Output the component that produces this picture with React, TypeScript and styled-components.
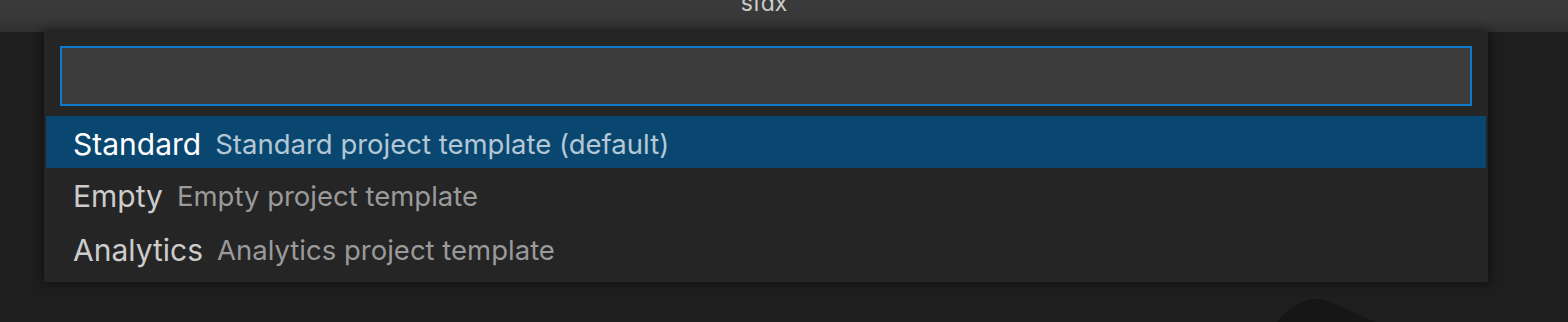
import React from "react";
import styled, { createGlobalStyle } from "styled-components";

const GlobalStyle = createGlobalStyle`
  html, body {
    margin: 0;
    padding: 0;
    background: #1e1e1e;
    overflow: hidden;
  }
  * { box-sizing: border-box; }
`;

const Window = styled.div`
  position: relative;
  width: 1568px;
  height: 322px;
  overflow: hidden;
  background: #1e1e1e;
  font-family: Inter, "Noto Sans", sans-serif;
`;

const TitleBar = styled.div`
  height: 32px;
  display: flex;
  justify-content: center;
  align-items: flex-start;
  background: linear-gradient(to bottom, #3b3b3b 0%, #383838 60%, #303030 100%);
  overflow: hidden;
`;

const Title = styled.span`
  margin-top: -8px;
  margin-right: 40px;
  font-size: 23px;
  line-height: 23px;
  color: #cccccc;
`;

const Workbench = styled.div`
  display: flex;
  height: 290px;
`;

const QuickPick = styled.div`
  margin-left: 44px;
  width: 1444px;
  height: 250px;
  padding: 14px 2px 6px;
  background: #252526;
  box-shadow: 0 0 10px 2px rgba(0, 0, 0, 0.45);
  display: flex;
  flex-direction: column;
`;

const InputBox = styled.div`
  flex-shrink: 0;
  margin: 0 14px;
  height: 60px;
  border: 2px solid #0e7acc;
  background: #3c3c3c;
`;

const List = styled.div`
  flex-shrink: 0;
  margin-top: 10px;
  display: flex;
  flex-direction: column;
`;

const Row = styled.div<{ $selected?: boolean; $tall?: boolean }>`
  flex-shrink: 0;
  height: ${(p) => (p.$tall ? 56 : 52)}px;
  padding-top: 4px;
  display: flex;
  align-items: center;
  padding-left: 27px;
  gap: 14px;
  background: ${(p) => (p.$selected ? "#094771" : "transparent")};
`;

const Label = styled.span<{ $selected?: boolean }>`
  font-size: 30px;
  color: ${(p) => (p.$selected ? "#ffffff" : "#cccccc")};
`;

const Description = styled.span<{ $selected?: boolean }>`
  font-size: 27.5px;
  color: ${(p) => (p.$selected ? "#b5c7d4" : "#9a9a9a")};
`;

const Watermark = styled.svg`
  position: absolute;
  left: 1260px;
  top: 290px;
`;

const items = [
  { label: "Standard", description: "Standard project template (default)" },
  { label: "Empty", description: "Empty project template" },
  { label: "Analytics", description: "Analytics project template" },
];

export default function App() {
  return (
    <Window>
      <GlobalStyle />
      <TitleBar>
        <Title>sfdx</Title>
      </TitleBar>
      <Workbench>
        <QuickPick>
          <InputBox />
          <List>
            {items.map((it, i) => (
              <Row key={it.label} $selected={i === 0} $tall={i === items.length - 1}>
                <Label $selected={i === 0}>{it.label}</Label>
                <Description $selected={i === 0}>{it.description}</Description>
              </Row>
            ))}
          </List>
        </QuickPick>
      </Workbench>
      <Watermark width="140" height="32" viewBox="0 0 140 32">
        <path d="M17 32 C 30 16, 45 8, 57 9 C 63 9, 68 11, 72 13 L 115 32 Z" fill="#161616" />
      </Watermark>
    </Window>
  );
}
